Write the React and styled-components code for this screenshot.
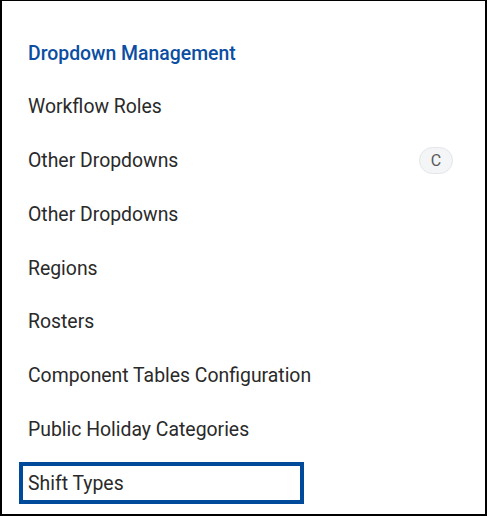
import React from "react"
import styled, { createGlobalStyle } from "styled-components"

const items = [
  { label: "Dropdown Management", heading: true },
  { label: "Workflow Roles" },
  { label: "Other Dropdowns", badge: "C" },
  { label: "Other Dropdowns" },
  { label: "Regions" },
  { label: "Rosters" },
  { label: "Component Tables Configuration" },
  { label: "Public Holiday Categories" },
  { label: "Shift Types", focused: true },
]

const App = () => (
  <>
    <GlobalStyle />
    <Frame>
      <Menu>
        {items.map((item, i) => (
          <Row key={i}>
            <Label $heading={item.heading} $focused={item.focused}>
              {item.label}
            </Label>
            {item.badge && <Badge>{item.badge}</Badge>}
          </Row>
        ))}
      </Menu>
    </Frame>
  </>
)

const GlobalStyle = createGlobalStyle`
  * {
    box-sizing: border-box;
  }

  body {
    margin: 0;
    background: #fff;
    font-family: Roboto, "Liberation Sans", sans-serif;
  }
`

const Frame = styled.div`
  width: 487px;
  height: 516px;
  border: 2px solid #000;
  border-top-width: 1px;
  background: #fff;
  overflow: hidden;
`

const Menu = styled.nav`
  display: flex;
  flex-direction: column;
  gap: 11.75px;
  padding: 31px 0 0 17px;
`

const Row = styled.div`
  display: flex;
  align-items: center;
  justify-content: space-between;
  height: 42px;
  padding-right: 32px;
`

const Label = styled.a`
  display: flex;
  align-items: center;
  width: 285px;
  height: 100%;
  padding: 0 9px;
  font-size: 19.4px;
  font-weight: ${p => (p.$heading ? 500 : 400)};
  color: ${p => (p.$heading ? "#0b4ea2" : "#2a2a2a")};
  outline: ${p => (p.$focused ? "4px solid #004a9c" : "none")};
  outline-offset: -4px;
  white-space: nowrap;
  cursor: pointer;
`

const Badge = styled.span`
  display: flex;
  align-items: center;
  justify-content: center;
  width: 34px;
  height: 27px;
  border-radius: 14px;
  background: #f4f5f7;
  border: 1px solid #e3e5ea;
  color: #5a5a5a;
  font-size: 16px;
`

export default App
